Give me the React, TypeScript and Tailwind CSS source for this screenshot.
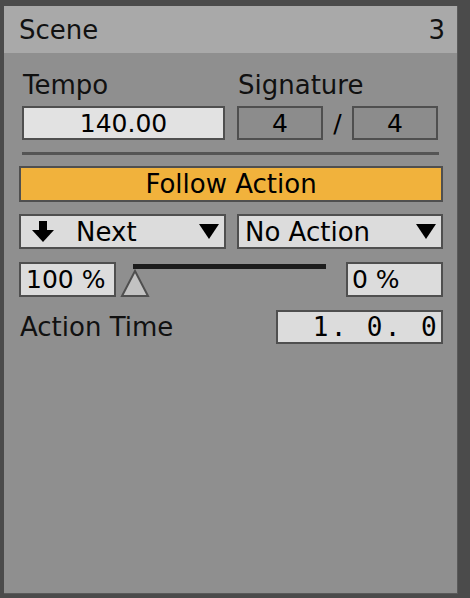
import React from "react";

const sans = "font-['DejaVu_Sans','Liberation_Sans',sans-serif]";

function Field({ className, children }: { className?: string; children: React.ReactNode }) {
  return (
    <div
      className={`flex items-center border-2 border-[#4f4f4f] text-[25px] leading-none text-black ${className ?? ""}`}
    >
      {children}
    </div>
  );
}

function Caret() {
  return (
    <svg width="20" height="15" viewBox="0 0 20 15" className="shrink-0">
      <polygon points="0,0 20,0 10,15" fill="#000" />
    </svg>
  );
}

export default function App() {
  return (
    <div className={`w-[470px] h-[598px] bg-[#4b4b4b] pl-[4px] pt-[6px] ${sans}`}>
      <div className="w-[454px] h-[588px] bg-[#8f8f8f] flex flex-col border-r border-b border-[#5a5a5a]">
        {/* Header */}
        <div className="h-[47px] bg-[#a9a9a9] flex items-center justify-between pl-[15px] pr-[12px] text-[26px] leading-none text-[#111]">
          <span>Scene</span>
          <span>3</span>
        </div>

        {/* Tempo / Signature */}
        <div className="pl-[18px] pr-[17px] pt-[10px]">
          <div className="flex gap-[12px]">
            <div className="w-[203px]">
              <div className="text-[26px] leading-none text-[#111] h-[43px] flex items-center pl-[1px]">Tempo</div>
              <Field className="h-[34px] bg-[#e2e2e2] justify-center">140.00</Field>
            </div>
            <div className="flex-1">
              <div className="text-[26px] leading-none text-[#111] h-[43px] flex items-center pl-[1px]">Signature</div>
              <div className="flex items-center h-[34px]">
                <Field className="h-[34px] w-[86px] bg-[#8c8c8c] justify-center">4</Field>
                <span className="w-[29px] text-center text-[25px] leading-none text-black">/</span>
                <Field className="h-[34px] w-[86px] bg-[#8c8c8c] justify-center">4</Field>
              </div>
            </div>
          </div>
          <div className="mt-[12px] h-[3px] bg-[#555555] mr-[1px]" />
        </div>

        {/* Follow Action */}
        <div className="pl-[15px] pr-[14px] pt-[11px] flex flex-col">
          <Field className="h-[36px] bg-[#f1b23c] justify-center text-[26px]">Follow Action</Field>

          <div className="mt-[12px] flex gap-[11px]">
            <Field className="h-[35px] w-[207px] bg-[#dcdcdc] pl-[11px] pr-[5px] text-[26px]">
              <svg width="22" height="21" viewBox="0 0 22 21" className="shrink-0">
                <rect x="7" y="0" width="8" height="10" fill="#000" />
                <polygon points="0,9 22,9 11,21" fill="#000" />
              </svg>
              <span className="ml-[22px] flex-1">Next</span>
              <Caret />
            </Field>
            <Field className="h-[35px] flex-1 bg-[#dcdcdc] pl-[6px] pr-[5px] text-[26px]">
              <span className="flex-1">No Action</span>
              <Caret />
            </Field>
          </div>

          <div className="mt-[13px] flex items-start">
            <Field className="h-[35px] w-[97px] bg-[#dcdcdc] pl-[5px]">100 %</Field>
            <div className="flex-1 relative h-[35px]">
              <div className="ml-[17px] mr-[20px] mt-[2px] h-[5px] bg-[#1c1c1c]" />
              <svg width="30" height="28" viewBox="0 0 30 28" className="absolute left-[4px] top-[7px]">
                <polygon points="15,2 28,27 2,27" fill="#c2c2c2" stroke="#4f4f4f" strokeWidth="2" />
              </svg>
            </div>
            <Field className="h-[35px] w-[97px] bg-[#dcdcdc] pl-[4px]">0 %</Field>
          </div>

          <div className="mt-[13px] flex items-center justify-between">
            <span className="text-[26px] leading-none text-[#111] pl-[1px]">Action Time</span>
            <Field className="h-[34px] w-[167px] bg-[#dcdcdc] justify-end pr-[2px] font-['DejaVu_Sans_Mono',monospace] text-[26px] tracking-[2.4px]">
              1. 0. 0
            </Field>
          </div>
        </div>
      </div>
    </div>
  );
}
